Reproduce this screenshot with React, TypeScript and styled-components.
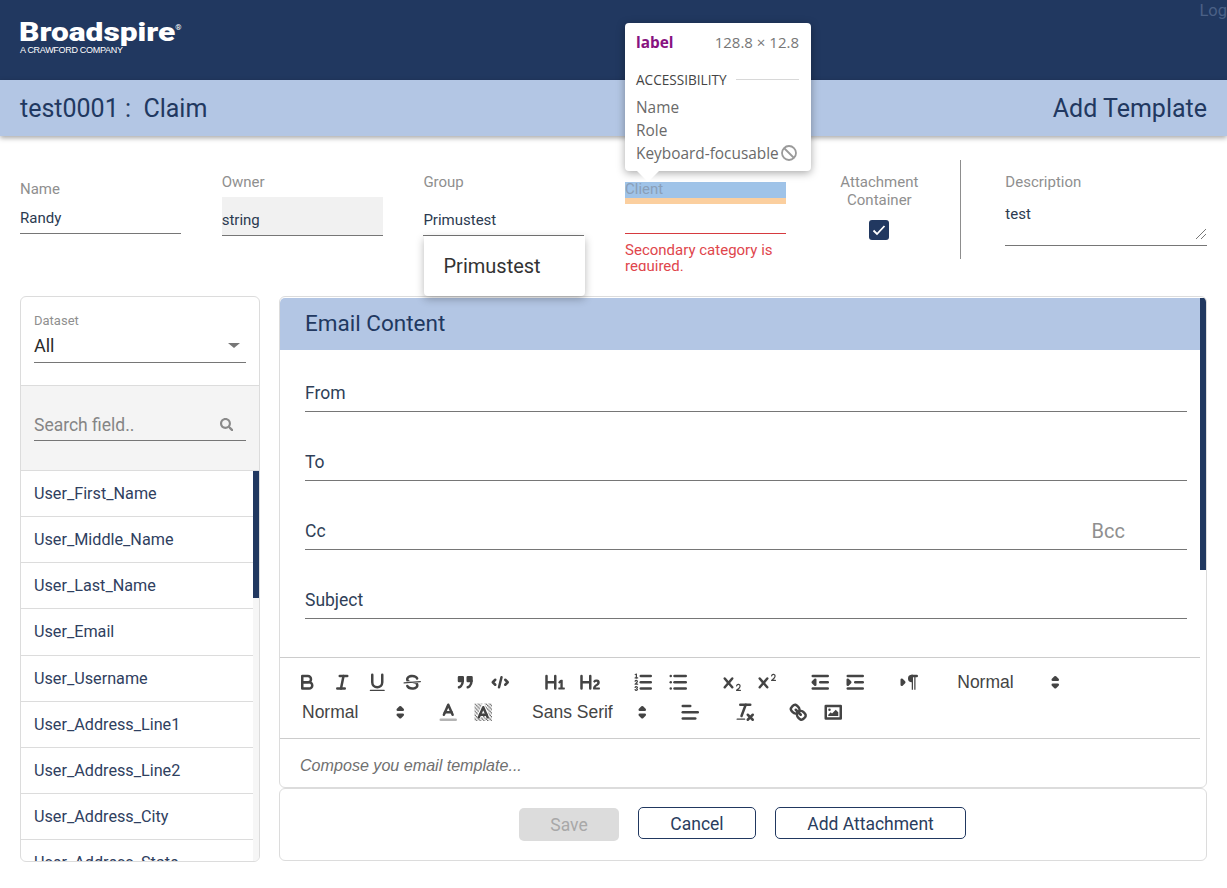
import React from "react";
import styled, { createGlobalStyle } from "styled-components";
import { FaSearch } from "react-icons/fa";

const Global = createGlobalStyle`
  html, body { margin: 0; padding: 0; background: #fff; overflow: hidden; }
  body { font-family: Roboto, "Liberation Sans", sans-serif; color: #213860; }
  * { box-sizing: border-box; }
`;

const Page = styled.div`
  position: relative;
  width: 1227px;
  height: 888px;
  overflow: hidden;
`;
const Header = styled.header`
  height: 80px;
  background: #213860;
  display: flex;
  justify-content: space-between;
  align-items: flex-start;
  padding: 0 0 0 19px;
`;
const Logo = styled.div`
  padding-top: 19px;
  color: #fff;
  display: flex;
  flex-direction: column;
`;
const LogoMark = styled.div`
  font-family: Roboto, sans-serif;
  font-weight: 900;
  font-size: 26px;
  line-height: 26px;
  display: flex;
  align-items: flex-start;
  transform: scaleX(1.22);
  transform-origin: left center;
  sup { font-size: 6.5px; line-height: 10px; margin: 4px 0 0 0; font-weight: 400; }
`;
const LogoSub = styled.div`
  font-family: "Liberation Sans", sans-serif;
  font-size: 9px;
  line-height: 9px;
  letter-spacing: -0.3px;
  margin: 1px 0 0 1px;
`;
const LogLink = styled.div`
  color: #4b6086;
  font-size: 16.5px;
  line-height: 19px;
  margin-top: 1px;
`;
const TitleBar = styled.div`
  height: 56px;
  background: #b3c6e4;
  display: flex;
  align-items: center;
  justify-content: space-between;
  padding: 0 20px;
  font-size: 25px;
  color: #213860;
  box-shadow: 0 2px 5px rgba(0, 0, 0, 0.35);
  white-space: pre;
`;
const FormRow = styled.div`
  height: 160px;
  padding: 24px 20px 0;
  display: flex;
  align-items: flex-start;
`;
const Field = styled.div<{ $top?: number }>`
  width: 161px;
  flex: none;
  margin-right: 40.7px;
  padding-top: ${(p) => p.$top ?? 13}px;
`;
const Label = styled.div`
  font-size: 15px;
  line-height: 18px;
  color: #8f8f8f;
`;
const Input = styled.div<{ $grey?: boolean; $h?: number }>`
  height: ${(p) => p.$h ?? 39}px;
  margin-top: ${(p) => (p.$h ? 11 : 6)}px;
  padding: ${(p) => (p.$h ? 0 : 14)}px 0 0;
  border-bottom: 1px solid #767676;
  background: ${(p) => (p.$grey ? "#f1f1f1" : "transparent")};
  font-size: 15px;
  line-height: 18px;
  color: #2b3a50;
`;
const ClientLabel = styled.div`
  height: 16px;
  background: #9fc3e8;
  font-size: 15px;
  line-height: 14px;
  color: #8a9fb8;
`;
const ClientPad = styled.div`
  height: 6px;
  background: #fbcf9f;
`;
const ErrorLine = styled.div`
  height: 30px;
  border-bottom: 1px solid #d63a3f;
`;
const ErrorText = styled.div`
  height: 29px;
  margin-top: 8px;
  overflow: hidden;
  color: #e0464c;
  font-size: 15px;
  line-height: 16px;
`;
const AttachField = styled.div`
  width: 108px;
  flex: none;
  margin: 13px 27px 0 -1.4px;
  text-align: center;
  display: flex;
  flex-direction: column;
  align-items: center;
`;
const CheckBox = styled.div`
  width: 20px;
  height: 20px;
  margin-top: 11px;
  background: #213860;
  border-radius: 3px;
  display: flex;
  align-items: center;
  justify-content: center;
`;
const VDivider = styled.div`
  width: 1px;
  height: 99px;
  background: #8d8d8d;
  flex: none;
  margin-right: 44px;
`;
const DescField = styled.div`
  width: 202px;
  flex: none;
  padding-top: 13px;
`;
const DescArea = styled.div`
  position: relative;
  height: 49px;
  margin-top: 6px;
  padding-top: 8px;
  border-bottom: 1px solid #767676;
  font-size: 15px;
  line-height: 18px;
  color: #2b3a50;
  svg { position: absolute; right: 0; bottom: 5px; }
`;
const Main = styled.div`
  display: flex;
  gap: 19px;
  padding: 0 20px;
`;
const FieldsPanel = styled.aside`
  position: relative;
  width: 240px;
  height: 566px;
  flex: none;
  border: 1px solid #dcdcdc;
  border-radius: 6px;
  overflow: hidden;
`;
const DatasetBox = styled.div`
  height: 89px;
  padding: 16px 13px 0;
  border-bottom: 1px solid #dcdcdc;
`;
const SmallLabel = styled.div`
  font-size: 13px;
  line-height: 15px;
  color: #8f8f8f;
`;
const SelectLine = styled.div`
  height: 33px;
  margin-top: 2px;
  display: flex;
  justify-content: space-between;
  align-items: center;
  border-bottom: 1px solid #767676;
  padding: 0 6px 1px 0;
  font-size: 18px;
  color: #2a2a2a;
`;
const Caret = styled.span`
  width: 0;
  height: 0;
  border-left: 6px solid transparent;
  border-right: 6px solid transparent;
  border-top: 5px solid #777;
`;
const SearchBox = styled.div`
  height: 85px;
  background: #f4f4f4;
  border-bottom: 1px solid #dcdcdc;
  padding: 24px 13px 0;
`;
const SearchLine = styled.div`
  height: 31px;
  display: flex;
  justify-content: space-between;
  align-items: center;
  padding: 0 13px 1px 0;
  border-bottom: 1px solid #767676;
  color: #858585;
  font-size: 17.5px;
  svg { color: #8a8a8a; }
`;
const FieldList = styled.ul`
  list-style: none;
  margin: 0;
  padding: 0;
`;
const FieldItem = styled.li`
  height: 46.15px;
  padding-left: 13px;
  display: flex;
  align-items: center;
  border-bottom: 1px solid #dcdcdc;
  font-size: 16.2px;
  color: #2f4060;
`;
const ThumbTrack = styled.div`
  position: absolute;
  right: 0;
  top: 174px;
  bottom: 0;
  width: 6px;
  background: #f6f6f6;
`;
const Thumb = styled.div<{ $h: number }>`
  width: 6px;
  height: ${(p) => p.$h}px;
  background: #213860;
`;
const RightCol = styled.div`
  width: 928px;
  flex: none;
  display: flex;
  flex-direction: column;
`;
const EmailCard = styled.section`
  position: relative;
  height: 492px;
  border: 1px solid #dcdcdc;
  border-radius: 6px;
  overflow: hidden;
  padding: 1px 6px 0 0;
`;
const CardHead = styled.div`
  height: 52px;
  background: #b3c6e4;
  padding: 0 0 2px 25px;
  display: flex;
  align-items: center;
  font-size: 22.5px;
  color: #213860;
  border-radius: 5px 0 0 0;
`;
const MailFields = styled.div`
  padding: 0 13px 0 25px;
  height: 307px;
`;
const MailRow = styled.div`
  height: 69px;
  display: flex;
  justify-content: space-between;
  align-items: flex-end;
  border-bottom: 1px solid #767676;
  font-size: 17.5px;
  line-height: 22px;
  color: #2f3f58;
  padding-bottom: 7px;
  &:first-child { height: 62px; }
  span + span { color: #8f8f8f; font-size: 20px; margin-right: 62px; }
`;
const Toolbar = styled.div`
  height: 82px;
  border-top: 1px solid #ccc;
  border-bottom: 1px solid #ccc;
  padding: 9.5px 0 0 10px;
`;
const ToolRow = styled.div`
  display: flex;
  height: 30px;
`;
const ToolGroup = styled.div<{ $ml?: number; $mr?: number }>`
  display: flex;
  margin-left: ${(p) => p.$ml ?? 0}px;
  margin-right: ${(p) => p.$mr ?? 18.75}px;
`;
const ToolButton = styled.div`
  width: 35px;
  height: 30px;
  display: flex;
  align-items: center;
  justify-content: center;
`;
const Icon = styled.svg`
  width: 22.5px;
  height: 22.5px;
  flex: none;
  .s { fill: none; stroke: #444; stroke-width: 2; stroke-linecap: round; stroke-linejoin: round; }
  .t { stroke-width: 1; }
  .f { fill: #444; stroke: none; }
`;
const Picker = styled.div<{ $w: number; $ml?: number; $mr?: number }>`
  width: ${(p) => p.$w}px;
  height: 30px;
  margin-left: ${(p) => p.$ml ?? 0}px;
  margin-right: ${(p) => p.$mr ?? 0}px;
  padding: 0 2.5px 0 10px;
  display: flex;
  align-items: center;
  justify-content: space-between;
  font-family: "Liberation Sans", Arial, sans-serif;
  font-size: 17.5px;
  color: #444;
`;
const Editor = styled.div`
  padding: 16px 0 0 20px;
  font-family: "Liberation Sans", Arial, sans-serif;
  font-style: italic;
  font-size: 16.1px;
  line-height: 20px;
  color: #707070;
`;
const EmailThumb = styled.div`
  position: absolute;
  top: 1px;
  right: 0;
  width: 6px;
  height: 272px;
  background: #213860;
`;
const ActionCard = styled.div`
  height: 73px;
  border: 1px solid #dcdcdc;
  border-radius: 6px;
  display: flex;
  justify-content: center;
  align-items: flex-start;
  gap: 19px;
  padding-top: 18px;
  padding-right: 1px;
`;
const Btn = styled.div<{ $w: number; $disabled?: boolean }>`
  width: ${(p) => p.$w}px;
  height: ${(p) => (p.$disabled ? 33 : 32)}px;
  margin-top: ${(p) => (p.$disabled ? 1 : 0)}px;
  padding-top: ${(p) => (p.$disabled ? 0 : 2)}px;
  border-radius: 5px;
  border: ${(p) => (p.$disabled ? "0" : "1px solid #213860")};
  background: ${(p) => (p.$disabled ? "#dcdcdc" : "#fff")};
  color: ${(p) => (p.$disabled ? "#a8a8a8" : "#2a3d5e")};
  display: flex;
  align-items: center;
  justify-content: center;
  font-size: 17.5px;
`;
const Menu = styled.div`
  position: absolute;
  left: 424px;
  top: 236px;
  width: 161px;
  height: 60px;
  padding-left: 19.5px;
  display: flex;
  align-items: center;
  background: #fff;
  border-radius: 0 0 4px 4px;
  box-shadow: 0 3px 8px rgba(0, 0, 0, 0.28);
  font-size: 20px;
  color: #333;
`;
const Inspect = styled.div`
  position: absolute;
  left: 625px;
  top: 23px;
  width: 186px;
  height: 148px;
  padding: 9px 12px 0 11px;
  background: #fff;
  border-radius: 4px;
  box-shadow: 0 2px 8px rgba(0, 0, 0, 0.35);
  font-family: "Open Sans", sans-serif;
  font-size: 15.4px;
  color: #6a6a6a;
  &::after {
    content: "";
    position: absolute;
    left: 12px;
    top: 148px;
    border-left: 11px solid transparent;
    border-right: 11px solid transparent;
    border-top: 11px solid #fff;
  }
`;
const InspectHead = styled.div`
  display: flex;
  justify-content: space-between;
  align-items: center;
  height: 20px;
  span:first-child { color: #881280; font-weight: 700; }
  span:last-child { color: #777; font-size: 15px; }
`;
const InspectSection = styled.div`
  display: flex;
  align-items: center;
  gap: 9px;
  margin-top: 17px;
  height: 20px;
  font-size: 13.6px;
  color: #444;
  &::after { content: ""; flex: 1; height: 1px; background: #d8d8d8; }
`;
const InspectLine = styled.div`
  height: 23px;
  line-height: 23px;
  display: flex;
  align-items: center;
  svg { margin: -2px 0 0 1px; flex: none; }
`;
const InspectList = styled.div`
  margin-top: 7px;
`;

const I: React.FC<{ children: React.ReactNode }> = ({ children }) => (
  <Icon viewBox="0 0 18 18">{children}</Icon>
);
const Tool: React.FC<{ children: React.ReactNode }> = ({ children }) => (
  <ToolButton>
    <I>{children}</I>
  </ToolButton>
);
const Arrows = () => (
  <I>
    <polygon className="s" points="7 11 9 13 11 11 7 11" />
    <polygon className="s" points="7 7 9 5 11 7 7 7" />
  </I>
);
const listLines = (x: number) => (
  <>
    <line className="s" x1={x} x2="15" y1="4" y2="4" />
    <line className="s" x1={x} x2="15" y1="9" y2="9" />
    <line className="s" x1={x} x2="15" y1="14" y2="14" />
  </>
);

const fields = [
  "User_First_Name",
  "User_Middle_Name",
  "User_Last_Name",
  "User_Email",
  "User_Username",
  "User_Address_Line1",
  "User_Address_Line2",
  "User_Address_City",
  "User_Address_State",
];

export default function App() {
  return (
    <Page>
      <Global />
      <Header>
        <Logo>
          <LogoMark>
            Broadspire<sup>®</sup>
          </LogoMark>
          <LogoSub>A CRAWFORD COMPANY</LogoSub>
        </Logo>
        <LogLink>Log</LogLink>
      </Header>
      <TitleBar>
        <span>test0001 :  Claim</span>
        <span>Add Template</span>
      </TitleBar>
      <FormRow>
        <Field $top={20}>
          <Label>Name</Label>
          <Input $h={25}>Randy</Input>
        </Field>
        <Field>
          <Label>Owner</Label>
          <Input $grey>string</Input>
        </Field>
        <Field>
          <Label>Group</Label>
          <Input>Primustest</Input>
        </Field>
        <Field $top={22}>
          <ClientLabel>Client</ClientLabel>
          <ClientPad />
          <ErrorLine />
          <ErrorText>Secondary category is required.</ErrorText>
        </Field>
        <AttachField>
          <Label>
            Attachment
            <br />
            Container
          </Label>
          <CheckBox>
            <svg width="14" height="12" viewBox="0 0 14 12" fill="none">
              <path d="M1.5 6.5 L5 10 L12.5 2" stroke="#fff" strokeWidth="1.8" />
            </svg>
          </CheckBox>
        </AttachField>
        <VDivider />
        <DescField>
          <Label>Description</Label>
          <DescArea>
            test
            <svg width="12" height="12" viewBox="0 0 12 12">
              <path d="M1 11 L11 1 M6 11 L11 6" stroke="#777" strokeWidth="1" />
            </svg>
          </DescArea>
        </DescField>
      </FormRow>
      <Main>
        <FieldsPanel>
          <DatasetBox>
            <SmallLabel>Dataset</SmallLabel>
            <SelectLine>
              All
              <Caret />
            </SelectLine>
          </DatasetBox>
          <SearchBox>
            <SearchLine>
              Search field..
              <FaSearch size={13.5} />
            </SearchLine>
          </SearchBox>
          <FieldList>
            {fields.map((f) => (
              <FieldItem key={f}>{f}</FieldItem>
            ))}
          </FieldList>
          <ThumbTrack>
            <Thumb $h={127} />
          </ThumbTrack>
        </FieldsPanel>
        <RightCol>
          <EmailCard>
            <CardHead>Email Content</CardHead>
            <MailFields>
              <MailRow>
                <span>From</span>
              </MailRow>
              <MailRow>
                <span>To</span>
              </MailRow>
              <MailRow>
                <span>Cc</span>
                <span>Bcc</span>
              </MailRow>
              <MailRow>
                <span>Subject</span>
              </MailRow>
            </MailFields>
            <Toolbar>
              <ToolRow>
                <ToolGroup $mr={17.5}>
                  <Tool>
                    <path className="s" d="M5,4H9.5A2.5,2.5,0,0,1,12,6.5v0A2.5,2.5,0,0,1,9.5,9H5A0,0,0,0,1,5,9V4A0,0,0,0,1,5,4Z" />
                    <path className="s" d="M5,9h5.5A2.5,2.5,0,0,1,13,11.5v0A2.5,2.5,0,0,1,10.5,14H5a0,0,0,0,1,0,0V9A0,0,0,0,1,5,9Z" />
                  </Tool>
                  <Tool>
                    <line className="s" x1="7" x2="13" y1="4" y2="4" />
                    <line className="s" x1="5" x2="11" y1="14" y2="14" />
                    <line className="s" x1="8" x2="10" y1="14" y2="4" />
                  </Tool>
                  <Tool>
                    <path className="s" d="M5,3V9a4.012,4.012,0,0,0,4,4H9a4.012,4.012,0,0,0,4-4V3" />
                    <rect className="f" height="1" rx=".5" ry=".5" width="12" x="3" y="15" />
                  </Tool>
                  <Tool>
                    <line className="s t" x1="15.5" x2="2.5" y1="8.5" y2="9.5" />
                    <path className="f" d="M9.007,8C6.542,7.791,6,7.519,6,6.5,6,5.792,7.283,5,9,5c1.571,0,2.765.679,2.969,1.309a1,1,0,0,0,1.9-.617C13.356,4.106,11.354,3,9,3,6.2,3,4,4.538,4,6.5a3.2,3.2,0,0,0,.5,1.843Z" />
                    <path className="f" d="M8.984,10C11.457,10.208,12,10.479,12,11.5c0,.708-1.283,1.5-3,1.5-1.571,0-2.765-.679-2.969-1.309a1,1,0,1,0-1.9.617C4.644,13.894,6.646,15,9,15c2.8,0,5-1.538,5-3.5a3.2,3.2,0,0,0-.5-1.843Z" />
                  </Tool>
                </ToolGroup>
                <ToolGroup $mr={19.75}>
                  <Tool>
                    <rect className="f" height="3" width="3" x="4" y="5" />
                    <rect className="f" height="3" width="3" x="11" y="5" />
                    <rect className="s" height="3" width="3" x="4" y="5" />
                    <rect className="s" height="3" width="3" x="11" y="5" />
                    <path className="s" d="M7,8c0,4.031-3,5-3,5" />
                    <path className="s" d="M14,8c0,4.031-3,5-3,5" />
                  </Tool>
                  <Tool>
                    <polyline className="s" points="5 7 3 9 5 11" />
                    <polyline className="s" points="13 7 15 9 13 11" />
                    <line className="s" x1="10" x2="8" y1="5" y2="13" />
                  </Tool>
                </ToolGroup>
                <ToolGroup>
                  <Tool>
                    <path className="f" d="M10,4V14a1,1,0,0,1-2,0V10H3v4a1,1,0,0,1-2,0V4A1,1,0,0,1,3,4V8H8V4a1,1,0,0,1,2,0Zm6.06787,9.209H14.98975V7.59863a.54085.54085,0,0,0-.605-.60547h-.62744a1.01119,1.01119,0,0,0-.748.29688L11.645,8.56641a.5435.5435,0,0,0-.022.8584l.28613.30762a.53861.53861,0,0,0,.84717.0332l.09912-.08789a1.2137,1.2137,0,0,0,.2417-.35254h.02246s-.01123.30859-.01123.60547V13.209H12.041a.54085.54085,0,0,0-.605.60547v.43945a.54085.54085,0,0,0,.605.60547h4.02686a.54085.54085,0,0,0,.605-.60547v-.43945A.54085.54085,0,0,0,16.06787,13.209Z" />
                  </Tool>
                  <Tool>
                    <path className="f" d="M16.73975,13.81445v.43945a.54085.54085,0,0,1-.605.60547H11.855a.58392.58392,0,0,1-.64893-.60547V14.0127c0-2.90527,3.39941-3.42187,3.39941-4.55469a.77675.77675,0,0,0-.84717-.78125,1.17684,1.17684,0,0,0-.83594.38477c-.2749.26367-.561.374-.85791.13184l-.4292-.34082c-.30811-.24219-.38525-.51758-.1543-.81445a2.97155,2.97155,0,0,1,2.45361-1.17676,2.45393,2.45393,0,0,1,2.68408,2.40918c0,2.45312-3.1792,2.92676-3.27832,3.93848h2.79443A.54085.54085,0,0,1,16.73975,13.81445ZM9,3A.99974.99974,0,0,0,8,4V8H3V4A1,1,0,0,0,1,4V14a1,1,0,0,0,2,0V10H8v4a1,1,0,0,0,2,0V4A.99974.99974,0,0,0,9,3Z" />
                  </Tool>
                </ToolGroup>
                <ToolGroup>
                  <Tool>
                    {listLines(7)}
                    <line className="s t" x1="2.5" x2="4.5" y1="5.5" y2="5.5" />
                    <path className="f" d="M3.5,6A0.5,0.5,0,0,1,3,5.5V3.085l-0.276.138A0.5,0.5,0,0,1,2.053,3c-0.124-.247-0.023-0.324.224-0.447l1-.5A0.5,0.5,0,0,1,4,2.5v3A0.5,0.5,0,0,1,3.5,6Z" />
                    <path className="s t" d="M4.5,10.5h-2c0-.234,1.85-1.076,1.85-2.234A0.959,0.959,0,0,0,2.5,8.156" />
                    <path className="s t" d="M2.5,14.846a0.959,0.959,0,0,0,1.85-.109A0.7,0.7,0,0,0,3.75,14a0.688,0.688,0,0,0,.6-0.736,0.959,0.959,0,0,0-1.85-.109" />
                  </Tool>
                  <Tool>
                    {listLines(6)}
                    <line className="s" x1="3" x2="3" y1="4" y2="4" />
                    <line className="s" x1="3" x2="3" y1="9" y2="9" />
                    <line className="s" x1="3" x2="3" y1="14" y2="14" />
                  </Tool>
                </ToolGroup>
                <ToolGroup $mr={17.75}>
                  <Tool>
                    <path className="f" d="M15.5,15H13.861a3.858,3.858,0,0,0,1.914-2.975,1.8,1.8,0,0,0-1.6-1.751A1.921,1.921,0,0,0,12.021,11.7a0.50013,0.50013,0,1,0,.957.291h0a0.914,0.914,0,0,1,1.053-.725,0.81,0.81,0,0,1,.744.762c0,1.076-1.16971,1.86982-1.93971,2.43082A1.45639,1.45639,0,0,0,12,15.5a0.5,0.5,0,0,0,.5.5h3A0.5,0.5,0,0,0,15.5,15Z" />
                    <path className="f" d="M9.65,5.241a1,1,0,0,0-1.409.108L6,7.964,3.759,5.349A1,1,0,0,0,2.192,6.59178Q2.2,6.6,2.241,6.651L4.684,9.5,2.241,12.35A1,1,0,0,0,3.71,13.70722q0.02892-.03052.05567-0.06322L6,11.036,8.241,13.65a1,1,0,1,0,1.567-1.24277Q9.75,12.4,9.759,12.35L7.316,9.5,9.759,6.651A1,1,0,0,0,9.65,5.241Z" />
                  </Tool>
                  <Tool>
                    <path className="f" d="M15.5,7H13.861a4.015,4.015,0,0,0,1.914-2.975,1.8,1.8,0,0,0-1.6-1.751A1.922,1.922,0,0,0,12.021,3.7a0.5,0.5,0,1,0,.957.291,0.917,0.917,0,0,1,1.053-.725,0.81,0.81,0,0,1,.744.762c0,1.077-1.164,1.925-1.934,2.486A1.423,1.423,0,0,0,12,7.5a0.5,0.5,0,0,0,.5.5h3A0.5,0.5,0,0,0,15.5,7Z" />
                    <path className="f" d="M9.651,5.241a1,1,0,0,0-1.41.108L6,7.964,3.759,5.349a1,1,0,1,0-1.519,1.3L4.683,9.5,2.241,12.35a1,1,0,1,0,1.519,1.3L6,11.036l2.241,2.614a1,1,0,0,0,1.519-1.3L7.317,9.5,9.759,6.651A1,1,0,0,0,9.651,5.241Z" />
                  </Tool>
                </ToolGroup>
                <ToolGroup>
                  <Tool>
                    <line className="s" x1="3" x2="15" y1="14" y2="14" />
                    <line className="s" x1="3" x2="15" y1="4" y2="4" />
                    <line className="s" x1="9" x2="15" y1="9" y2="9" />
                    <polyline className="f" points="5 7 5 11 3 9 5 7" />
                    <polyline className="s" points="5 7 5 11 3 9 5 7" />
                  </Tool>
                  <Tool>
                    <line className="s" x1="3" x2="15" y1="14" y2="14" />
                    <line className="s" x1="3" x2="15" y1="4" y2="4" />
                    <line className="s" x1="9" x2="15" y1="9" y2="9" />
                    <polyline className="f" points="3 7 3 11 5 9 3 7" />
                    <polyline className="s" points="3 7 3 11 5 9 3 7" />
                  </Tool>
                </ToolGroup>
                <ToolGroup $mr={21}>
                  <Tool>
                    <polygon className="s" points="3 11 5 9 3 7 3 11" />
                    <line className="s" x1="15" x2="11" y1="4" y2="4" />
                    <path className="f" d="M11,3a3,3,0,0,0,0,6h1V3H11Z" />
                    <rect className="f" height="11" width="1" x="11" y="4" />
                    <rect className="f" height="11" width="1" x="13" y="4" />
                  </Tool>
                </ToolGroup>
                <Picker $w={122}>
                  Normal
                  <Arrows />
                </Picker>
              </ToolRow>
              <ToolRow>
                <Picker $w={122} $ml={2} $mr={17}>
                  Normal
                  <Arrows />
                </Picker>
                <ToolGroup $mr={21}>
                  <Tool>
                    <line className="s" opacity="0.4" x1="3" x2="15" y1="15" y2="15" />
                    <polyline className="s" points="5.5 11 9 3 12.5 11" />
                    <line className="s" x1="11.63" x2="6.38" y1="9" y2="9" />
                  </Tool>
                  <Tool>
                    <pattern id="hatch" width="3" height="3" patternUnits="userSpaceOnUse">
                      <rect x="0" y="0" width="1" height="1" fill="#444" />
                      <rect x="1" y="1" width="1" height="1" fill="#444" />
                      <rect x="2" y="2" width="1" height="1" fill="#444" />
                    </pattern>
                    <rect x="2" y="2" width="14" height="14" fill="url(#hatch)" />
                    <polyline fill="none" stroke="#fff" strokeWidth="3.6" points="5.5 13 9 5 12.5 13" />
                    <polyline className="s" points="5.5 13 9 5 12.5 13" />
                    <line className="s" x1="11.63" x2="6.38" y1="11" y2="11" />
                  </Tool>
                </ToolGroup>
                <Picker $w={134} $mr={17}>
                  Sans Serif
                  <Arrows />
                </Picker>
                <ToolGroup $mr={19.75}>
                  <Tool>
                    <line className="s" x1="3" x2="15" y1="9" y2="9" />
                    <line className="s" x1="3" x2="13" y1="14" y2="14" />
                    <line className="s" x1="3" x2="9" y1="4" y2="4" />
                  </Tool>
                </ToolGroup>
                <ToolGroup $mr={17.5}>
                  <Tool>
                    <line className="s" x1="5" x2="13" y1="3" y2="3" />
                    <line className="s" x1="6" x2="9.35" y1="12" y2="3" />
                    <line className="s" x1="11" x2="15" y1="11" y2="15" />
                    <line className="s" x1="15" x2="11" y1="11" y2="15" />
                    <rect className="f" height="1" rx=".5" ry=".5" width="7" x="2" y="14" />
                  </Tool>
                </ToolGroup>
                <ToolGroup>
                  <Tool>
                    <line className="s" x1="7" x2="11" y1="7" y2="11" />
                    <path className="s" d="M8.9,4.577a3.476,3.476,0,0,1,.36,4.679A3.476,3.476,0,0,1,4.577,8.9C3.185,7.5,2.035,6.4,4.217,4.217S7.5,3.185,8.9,4.577Z" />
                    <path className="s" d="M13.423,9.1a3.476,3.476,0,0,0-4.679-.36,3.476,3.476,0,0,0,.36,4.679c1.392,1.392,2.5,2.542,4.679.36S14.815,10.5,13.423,9.1Z" />
                  </Tool>
                  <Tool>
                    <rect className="s" height="10" width="12" x="3" y="4" />
                    <circle className="f" cx="6" cy="7" r="1" />
                    <polyline className="f" points="5 12 5 11 7 9 8 10 11 7 13 9 13 12 5 12" />
                  </Tool>
                </ToolGroup>
              </ToolRow>
            </Toolbar>
            <Editor>Compose you email template...</Editor>
            <EmailThumb />
          </EmailCard>
          <ActionCard>
            <Btn $w={100} $disabled>
              Save
            </Btn>
            <Btn $w={118}>Cancel</Btn>
            <Btn $w={191}>Add Attachment</Btn>
          </ActionCard>
        </RightCol>
      </Main>
      <Menu>Primustest</Menu>
      <Inspect>
        <InspectHead>
          <span>label</span>
          <span>128.8 × 12.8</span>
        </InspectHead>
        <InspectSection>ACCESSIBILITY</InspectSection>
        <InspectList>
          <InspectLine>Name</InspectLine>
          <InspectLine>Role</InspectLine>
          <InspectLine>
            Keyboard-focusable
            <svg width="18" height="18" viewBox="0 0 18 18" fill="none" stroke="#9a9a9a" strokeWidth="1.8">
              <circle cx="9" cy="9" r="7" />
              <path d="M4 4 L14 14" />
            </svg>
          </InspectLine>
        </InspectList>
      </Inspect>
    </Page>
  );
}
